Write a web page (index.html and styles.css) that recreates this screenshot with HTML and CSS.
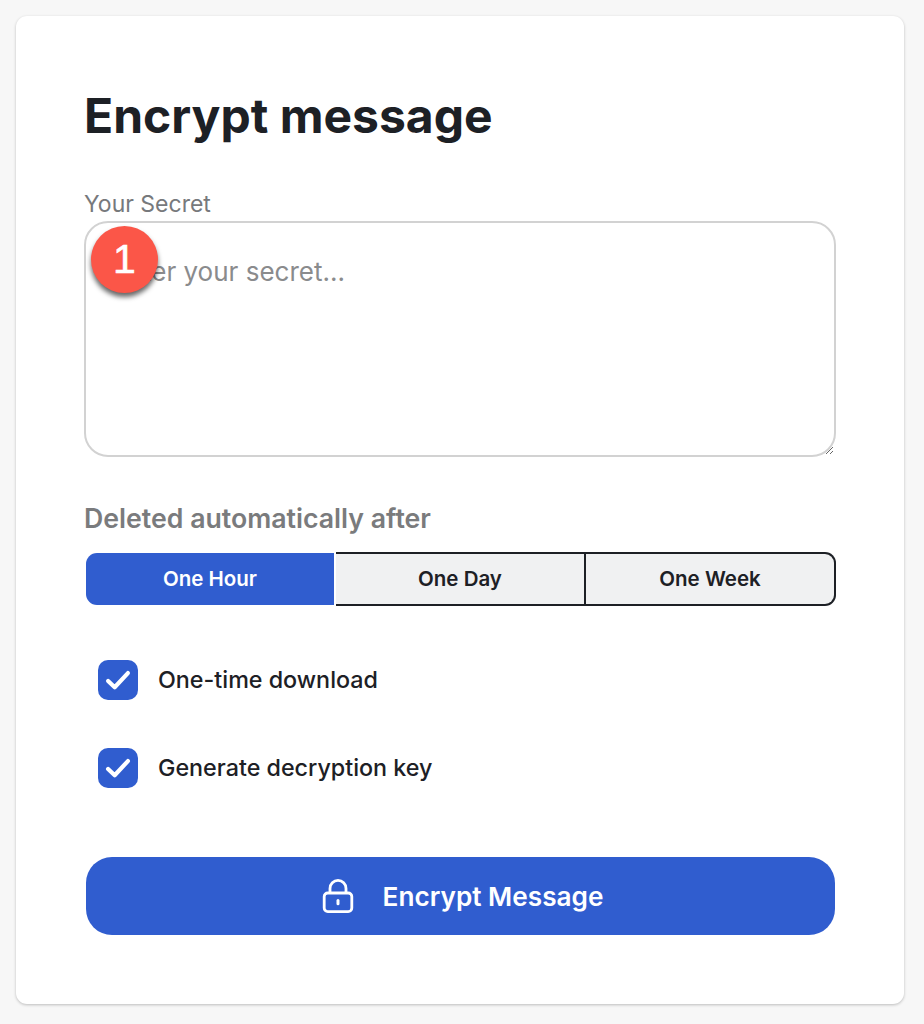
FILE: index.html
```html
<!DOCTYPE html>
<html lang="en">
<head>
<meta charset="utf-8">
<title>Encrypt message</title>
<link rel="stylesheet" href="styles.css">
</head>
<body>
<main class="card">
  <h1 class="title">Encrypt message</h1>
  <label class="field-label" for="secret">Your Secret</label>
  <div class="secret-wrap">
    <textarea id="secret" class="secret" placeholder="Enter your secret..."></textarea>
    <span class="badge">1</span>
  </div>
  <h2 class="section-label">Deleted automatically after</h2>
  <div class="segments">
    <button class="segment active">One Hour</button>
    <button class="segment">One Day</button>
    <button class="segment">One Week</button>
  </div>
  <div class="options">
    <div class="option">
      <span class="check"><svg viewBox="0 0 24 24" width="36" height="36"><path d="M5.4 12.6l4.4 4.2 8.8-9.4" fill="none" stroke="#fff" stroke-width="2.8" stroke-linecap="round" stroke-linejoin="round"/></svg></span>
      <span>One-time download</span>
    </div>
    <div class="option">
      <span class="check"><svg viewBox="0 0 24 24" width="36" height="36"><path d="M5.4 12.6l4.4 4.2 8.8-9.4" fill="none" stroke="#fff" stroke-width="2.8" stroke-linecap="round" stroke-linejoin="round"/></svg></span>
      <span>Generate decryption key</span>
    </div>
  </div>
  <button class="submit">
    <svg class="lock" viewBox="0 0 32 36" width="32" height="36"><rect x="2.2" y="15" width="27.6" height="18.6" rx="3.6" fill="none" stroke="#fff" stroke-width="2.8"/><path d="M8 15V10.4a8 8 0 0 1 16 0V15" fill="none" stroke="#fff" stroke-width="2.8"/><path d="M16 22.5v3.2" stroke="#fff" stroke-width="3" stroke-linecap="round"/></svg>
    <span class="submit-text">Encrypt Message</span>
  </button>
</main>
</body>
</html>
```
FILE: styles.css
```css
* { box-sizing: border-box; }
html, body { margin: 0; height: 100%; }
body {
  background: #f7f7f7;
  padding: 16px 20px 20px 16px;
  font-family: Inter, "Liberation Sans", sans-serif;
  color: #1d2025;
}
.card {
  width: 888px;
  height: 988px;
  background: #fff;
  border-radius: 11px;
  box-shadow: 0 1px 3px rgba(0,0,0,.24);
  padding: 68px 68px 0 68px;
}
.title {
  margin: 0;
  font-size: 48px;
  line-height: 64px;
  font-weight: 700;
}
.field-label {
  display: block;
  margin-top: 41px;
  font-size: 23px;
  line-height: 30px;
  color: #77797c;
}
.secret-wrap { position: relative; height: 236px; margin-top: 2px; }
.secret {
  display: block;
  width: 100%;
  height: 100%;
  border: 2px solid #d2d2d2;
  border-radius: 24px;
  padding: 34px 26px;
  font: 400 26px/30px Inter, "Liberation Sans", sans-serif;
  outline: none;
  background: #fff;
}
.secret::placeholder { color: #8a8b8d; opacity: 1; }
.badge {
  position: absolute;
  left: 7px;
  top: 5px;
  width: 67px;
  height: 67px;
  border-radius: 50%;
  background: #fb5648;
  color: #fff;
  font: 400 41px/66px "Liberation Sans", sans-serif;
  -webkit-text-stroke: 0.6px #fff;
  text-align: center;
  box-shadow: 0 4px 5px rgba(0,0,0,.6);
}
.section-label {
  margin: 44px 0 0;
  font-size: 26.7px;
  line-height: 34px;
  font-weight: 600;
  color: #7a7b7d;
}
.segments {
  display: grid;
  grid-template-columns: 252px 250px 250px;
  height: 54px;
  margin-top: 17px;
}
.segment {
  font: 600 20.5px/1 Inter, "Liberation Sans", sans-serif;
  color: #1d2025;
  background: #f0f1f2;
  border: 2px solid #1d2025;
  border-left: 0;
  padding: 0;
}
.segment:last-child { border-radius: 0 11px 11px 0; }
.segment.active {
  background: #305dcf;
  color: #fff;
  border: 0;
  border-radius: 11px 0 0 11px;
  margin: 1px 2px 1px 2px;
}
.options { display: flex; flex-direction: column; gap: 47px; margin: 53px 0 0 14px; }
.option {
  display: flex;
  align-items: center;
  gap: 20px;
  height: 41px;
  font-size: 23.3px;
  font-weight: 500;
}
.check {
  width: 40px;
  height: 40px;
  background: #305dcf;
  border-radius: 10px;
  display: flex;
  align-items: center;
  justify-content: center;
}
.submit {
  display: flex;
  align-items: center;
  justify-content: center;
  gap: 29px;
  width: 749px;
  height: 78px;
  margin: 69px 0 0 2px;
  border: 0;
  border-radius: 26px;
  background: #305dcf;
  color: #fff;
  font: 600 26.2px/1 Inter, "Liberation Sans", sans-serif;
  padding: 0 0 0 4px;
}
.submit-text { padding-top: 2px; }
```
